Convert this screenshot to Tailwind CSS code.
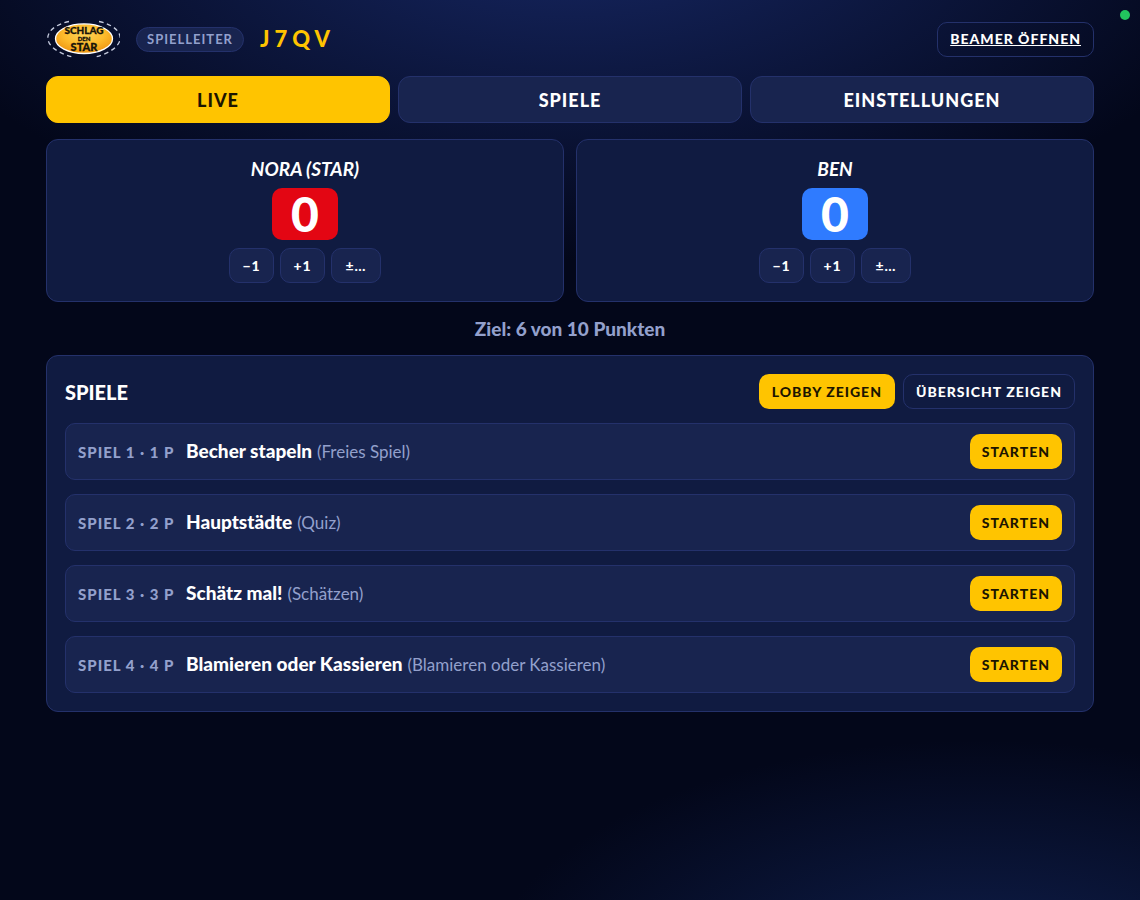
<!DOCTYPE html>
<html lang="de">
<head>
<meta charset="utf-8">
<meta name="viewport" content="width=device-width, initial-scale=1">
<title>Schlag den Star – Spielleiter</title>
<script src="https://cdn.jsdelivr.net/npm/@tailwindcss/browser@4"></script>
</head>
<body class="min-h-screen bg-[#03071a] bg-[radial-gradient(ellipse_700px_350px_at_50%_-10%,#172866,transparent),radial-gradient(ellipse_500px_250px_at_86%_110%,#10204f,transparent)] bg-no-repeat font-['Lato','Liberation_Sans',sans-serif] text-[19px] leading-6 text-white">
<span class="fixed top-[10px] right-[10px] size-[10px] rounded-full bg-[#22c55e]" role="status" aria-label="Verbunden"></span>
<div class="mx-auto flex max-w-[1080px] flex-col px-4 pt-5 pb-10">
  <header class="flex h-[38px] items-center justify-between">
    <div class="flex items-center gap-4">
      <svg class="h-[38px] w-[74px]" viewBox="0 0 74 38" role="img" aria-label="Schlag den Star">
        <defs><radialGradient id="gold" cx="50%" cy="35%" r="65%"><stop offset="0" stop-color="#ffd458"/><stop offset=".55" stop-color="#fdbb2c"/><stop offset="1" stop-color="#ee9410"/></radialGradient></defs>
        <g fill="none" stroke="#c3c9dc" stroke-width="1.3" stroke-dasharray="4.500 3.500">
          <path d="M23 1.500C-6 8-6 29 28 37.300"/>
          <path d="M53 1.500C82 8 82 29 48 37.300"/>
        </g>
        <ellipse cx="38" cy="18.700" rx="28.500" ry="14.800" fill="url(#gold)" stroke="#fff" stroke-width="1.300"/>
        <g fill="#17130a" stroke="#17130a" stroke-width=".3" text-anchor="middle" font-family="Lato, sans-serif" font-weight="900">
          <text x="38" y="14" font-size="10">SCHLAG</text>
          <text x="38" y="21" font-size="6">DEN</text>
          <text x="38" y="31" font-size="11">STAR</text>
        </g>
      </svg>
      <span class="flex h-[25px] items-center rounded-full border border-[#24316b] bg-[#18244f] px-[10px] text-[13px] font-bold tracking-[1px] text-[#93a0cc]">SPIELLEITER</span>
      <strong class="text-[22px] font-black tracking-[5px] text-[#ffc400]">J7QV</strong>
    </div>
    <a href="#beamer" class="flex h-[35px] items-center rounded-[10px] border border-[#24316b] px-3 text-sm font-black tracking-[1px] underline">BEAMER ÖFFNEN</a>
  </header>

  <nav class="mt-[18px] grid grid-cols-3 gap-2 text-lg">
    <button class="h-[47px] rounded-xl border border-[#ffc400] bg-[#ffc400] font-black tracking-[1px] text-[#1c1500]">LIVE</button>
    <button class="h-[47px] rounded-xl border border-[#24316b] bg-[#18244f] font-black tracking-[1px]">SPIELE</button>
    <button class="h-[47px] rounded-xl border border-[#24316b] bg-[#18244f] font-black tracking-[1px]">EINSTELLUNGEN</button>
  </nav>

  <main>
    <div class="mt-4 grid grid-cols-2 gap-3">
      <section class="flex flex-col items-center gap-2 rounded-xl border border-[#24316b] bg-[#101b41] p-[18px]">
        <h2 class="leading-[22px] font-bold italic">NORA (STAR)</h2>
        <output class="flex h-[52px] w-[66px] items-center justify-center rounded-[10px] bg-[#e30613] text-5xl font-black">0</output>
        <div class="flex gap-[6px]">
          <button class="h-[35px] w-[45px] rounded-[10px] border border-[#24316b] bg-[#18244f] text-sm font-black tracking-[1px]">−1</button>
          <button class="h-[35px] w-[45px] rounded-[10px] border border-[#24316b] bg-[#18244f] text-sm font-black tracking-[1px]">+1</button>
          <button class="h-[35px] w-[50px] rounded-[10px] border border-[#24316b] bg-[#18244f] text-sm font-black tracking-[1px]">±…</button>
        </div>
      </section>
      <section class="flex flex-col items-center gap-2 rounded-xl border border-[#24316b] bg-[#101b41] p-[18px]">
        <h2 class="leading-[22px] font-bold italic">BEN</h2>
        <output class="flex h-[52px] w-[66px] items-center justify-center rounded-[10px] bg-[#2f7bff] text-5xl font-black">0</output>
        <div class="flex gap-[6px]">
          <button class="h-[35px] w-[45px] rounded-[10px] border border-[#24316b] bg-[#18244f] text-sm font-black tracking-[1px]">−1</button>
          <button class="h-[35px] w-[45px] rounded-[10px] border border-[#24316b] bg-[#18244f] text-sm font-black tracking-[1px]">+1</button>
          <button class="h-[35px] w-[50px] rounded-[10px] border border-[#24316b] bg-[#18244f] text-sm font-black tracking-[1px]">±…</button>
        </div>
      </section>
    </div>

    <p class="mt-[15px] mb-[14px] text-center font-black text-[#93a0cc]">Ziel: 6 von 10 Punkten</p>

    <section class="rounded-xl border border-[#24316b] bg-[#101b41] p-[18px]">
      <div class="flex items-center justify-between">
        <h2 class="text-xl font-black">SPIELE</h2>
        <div class="flex gap-2">
          <button class="h-[35px] rounded-[10px] bg-[#ffc400] px-[13px] text-sm font-black tracking-[1px] text-[#1c1500]">LOBBY ZEIGEN</button>
          <button class="h-[35px] rounded-[10px] border border-[#24316b] px-3 text-sm font-black tracking-[1px]">ÜBERSICHT ZEIGEN</button>
        </div>
      </div>
      <ul class="mt-[14px] flex flex-col gap-[14px]">
        <li class="flex items-center gap-[10px] rounded-[10px] border border-[#24316b] bg-[#18244f] px-3 py-[10px]">
          <span class="min-w-[98px] text-[15px] font-black tracking-[1px] text-[#93a0cc]">SPIEL 1 · 1 P</span>
          <span class="flex-1"><b class="font-black">Becher stapeln</b> <span class="text-[17px] text-[#93a0cc]">(Freies Spiel)</span></span>
          <button class="h-[35px] rounded-[10px] bg-[#ffc400] px-3 text-sm font-black tracking-[1px] text-[#1c1500]">STARTEN</button>
        </li>
        <li class="flex items-center gap-[10px] rounded-[10px] border border-[#24316b] bg-[#18244f] px-3 py-[10px]">
          <span class="min-w-[98px] text-[15px] font-black tracking-[1px] text-[#93a0cc]">SPIEL 2 · 2 P</span>
          <span class="flex-1"><b class="font-black">Hauptstädte</b> <span class="text-[17px] text-[#93a0cc]">(Quiz)</span></span>
          <button class="h-[35px] rounded-[10px] bg-[#ffc400] px-3 text-sm font-black tracking-[1px] text-[#1c1500]">STARTEN</button>
        </li>
        <li class="flex items-center gap-[10px] rounded-[10px] border border-[#24316b] bg-[#18244f] px-3 py-[10px]">
          <span class="min-w-[98px] text-[15px] font-black tracking-[1px] text-[#93a0cc]">SPIEL 3 · 3 P</span>
          <span class="flex-1"><b class="font-black">Schätz mal!</b> <span class="text-[17px] text-[#93a0cc]">(Schätzen)</span></span>
          <button class="h-[35px] rounded-[10px] bg-[#ffc400] px-3 text-sm font-black tracking-[1px] text-[#1c1500]">STARTEN</button>
        </li>
        <li class="flex items-center gap-[10px] rounded-[10px] border border-[#24316b] bg-[#18244f] px-3 py-[10px]">
          <span class="min-w-[98px] text-[15px] font-black tracking-[1px] text-[#93a0cc]">SPIEL 4 · 4 P</span>
          <span class="flex-1"><b class="font-black">Blamieren oder Kassieren</b> <span class="text-[17px] text-[#93a0cc]">(Blamieren oder Kassieren)</span></span>
          <button class="h-[35px] rounded-[10px] bg-[#ffc400] px-3 text-sm font-black tracking-[1px] text-[#1c1500]">STARTEN</button>
        </li>
      </ul>
    </section>
  </main>
</div>
</body>
</html>
